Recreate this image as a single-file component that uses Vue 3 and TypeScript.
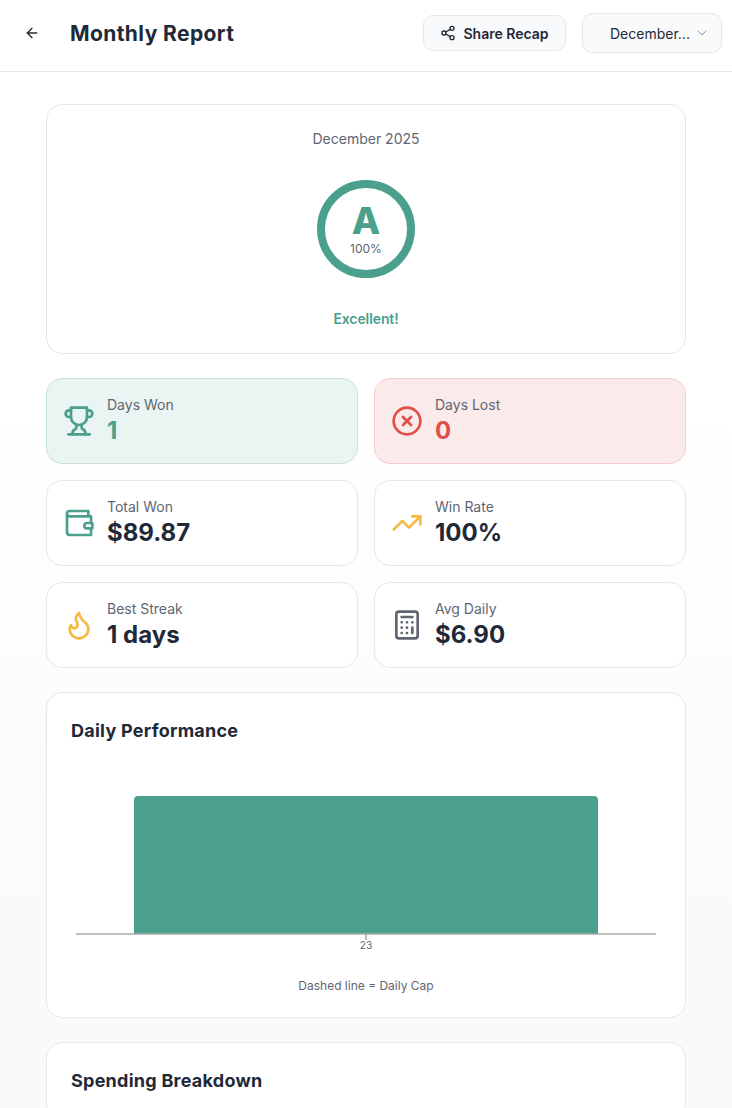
<script setup lang="ts">
interface Stat {
  label: string;
  value: string;
  icon: string;
  tone: string;
  iconTone: string;
}

const stats: Stat[] = [
  { label: 'Days Won', value: '1', icon: 'trophy', tone: 'won', iconTone: 'green' },
  { label: 'Days Lost', value: '0', icon: 'x', tone: 'lost', iconTone: 'red' },
  { label: 'Total Won', value: '$89.87', icon: 'wallet', tone: '', iconTone: 'green' },
  { label: 'Win Rate', value: '100%', icon: 'trend', tone: '', iconTone: 'amber' },
  { label: 'Best Streak', value: '1 days', icon: 'flame', tone: '', iconTone: 'amber' },
  { label: 'Avg Daily', value: '$6.90', icon: 'calc', tone: '', iconTone: 'gray' },
];
</script>

<template>
  <div class="page">
    <header class="topbar">
      <button class="back" aria-label="Back">
        <svg viewBox="0 0 24 24" class="icon16"><path d="m12 19-7-7 7-7" /><path d="M19 12H5" /></svg>
      </button>
      <h1>Monthly Report</h1>
      <button class="share">
        <svg viewBox="0 0 24 24" class="icon16">
          <circle cx="18" cy="5" r="3" /><circle cx="6" cy="12" r="3" /><circle cx="18" cy="19" r="3" />
          <line x1="8.59" y1="13.51" x2="15.42" y2="17.49" /><line x1="15.41" y1="6.51" x2="8.59" y2="10.49" />
        </svg>
        Share Recap
      </button>
      <button class="month">
        <span>December...</span>
        <svg viewBox="0 0 24 24" class="chev"><path d="m6 9 6 6 6-6" /></svg>
      </button>
    </header>

    <main class="content">
      <section class="card grade-card">
        <div class="period">December 2025</div>
        <div class="ring">
          <span class="letter">A</span>
          <span class="pct">100%</span>
        </div>
        <div class="verdict">Excellent!</div>
      </section>

      <section class="stats">
        <div v-for="s in stats" :key="s.label" class="stat" :class="s.tone">
          <svg viewBox="0 0 24 24" class="stat-icon" :class="s.iconTone">
            <template v-if="s.icon === 'trophy'">
              <path d="M6 9H4.5a2.5 2.5 0 0 1 0-5H6" /><path d="M18 9h1.5a2.5 2.5 0 0 0 0-5H18" /><path d="M4 22h16" />
              <path d="M10 14.66V17c0 .55-.47.98-.97 1.21C7.85 18.75 7 20.24 7 22" />
              <path d="M14 14.66V17c0 .55.47.98.97 1.21C16.15 18.75 17 20.24 17 22" />
              <path d="M18 2H6v7a6 6 0 0 0 12 0V2Z" />
            </template>
            <template v-else-if="s.icon === 'x'">
              <circle cx="12" cy="12" r="10" /><path d="m15 9-6 6" /><path d="m9 9 6 6" />
            </template>
            <template v-else-if="s.icon === 'wallet'">
              <path d="M21 12V7H5a2 2 0 0 1 0-4h14v4" /><path d="M3 5v14a2 2 0 0 0 2 2h16v-5" />
              <path d="M18 12a2 2 0 0 0 0 4h4v-4Z" />
            </template>
            <template v-else-if="s.icon === 'trend'">
              <polyline points="22 7 13.5 15.5 8.5 10.5 2 17" /><polyline points="16 7 22 7 22 13" />
            </template>
            <template v-else-if="s.icon === 'flame'">
              <path d="M8.5 14.5A2.5 2.5 0 0 0 11 12c0-1.38-.5-2-1-3-1.072-2.143-.224-4.054 2-6 .5 2.5 2 4.9 4 6.5 2 1.6 3 3.5 3 5.5a7 7 0 1 1-14 0c0-1.153.433-2.294 1-3a2.5 2.5 0 0 0 2.5 2.5z" />
            </template>
            <template v-else>
              <rect x="4" y="2" width="16" height="20" rx="2" /><line x1="8" y1="6" x2="16" y2="6" />
              <line x1="16" y1="14" x2="16" y2="18" />
              <path d="M16 10h.01M12 10h.01M8 10h.01M12 14h.01M8 14h.01M12 18h.01M8 18h.01" />
            </template>
          </svg>
          <div class="stat-text">
            <div class="stat-label">{{ s.label }}</div>
            <div class="stat-value">{{ s.value }}</div>
          </div>
        </div>
      </section>

      <section class="card chart-card">
        <h2>Daily Performance</h2>
        <svg class="chart" viewBox="0 0 590 190" width="590" height="190">
          <path class="bar" d="M63 178V44a4 4 0 0 1 4-4h456a4 4 0 0 1 4 4v134z" />
          <line class="axis" x1="5" y1="178" x2="585" y2="178" stroke-width="1.7" />
          <line class="axis" x1="295" y1="178" x2="295" y2="184" stroke-width="1.5" />
          <text x="295" y="193" text-anchor="middle" class="tick">23</text>
        </svg>
        <p class="note">Dashed line = Daily Cap</p>
      </section>

      <section class="card">
        <h2>Spending Breakdown</h2>
      </section>
    </main>
  </div>
</template>

<style>
body {
  background: #fff;
}
</style>

<style scoped>
.page {
  height: 100vh;
  display: flex;
  flex-direction: column;
  overflow: hidden;
  font-family: Inter, "Liberation Sans", sans-serif;
  color: #1f2937;
  background: linear-gradient(#fff 400px, #fafafb 900px);
}
.topbar {
  height: 72px;
  box-sizing: border-box;
  flex: none;
  display: flex;
  align-items: center;
  background: #fff;
  border-bottom: 1px solid #e5e7eb;
  padding: 0 10px 5px 24px;
}
svg {
  fill: none;
  stroke: currentColor;
  stroke-width: 2;
  stroke-linecap: round;
  stroke-linejoin: round;
}
button {
  font-family: inherit;
  color: #1f2937;
  cursor: pointer;
}
.back {
  width: 16px;
  height: 16px;
  padding: 0;
  border: 0;
  background: none;
  display: flex;
}
.icon16 {
  width: 16px;
  height: 16px;
  flex: none;
}
h1 {
  margin: 0 0 0 30px;
  flex: 1;
  font-size: 21px;
  font-weight: 700;
  letter-spacing: 0.4px;
}
.share {
  height: 36px;
  width: 143px;
  display: flex;
  align-items: center;
  justify-content: center;
  gap: 7px;
  border: 1px solid #e5e7eb;
  border-radius: 10px;
  background: #f9fafb;
  font-size: 14px;
  font-weight: 600;
}
.month {
  height: 40px;
  width: 140px;
  margin-left: 16px;
  display: flex;
  align-items: center;
  padding: 0 11px 0 27px;
  border: 1px solid #e5e7eb;
  border-radius: 10px;
  background: #f9fafb;
  font-size: 14px;
}
.chev {
  width: 16px;
  height: 16px;
  margin-left: auto;
  opacity: 0.5;
  stroke-width: 1.5;
}
.content {
  width: 640px;
  margin: 0 auto;
  padding-top: 32px;
  display: flex;
  flex-direction: column;
  gap: 24px;
}
.card {
  flex: none;
  background: #fff;
  border: 1px solid #e5e7eb;
  border-radius: 16px;
  padding: 24px;
}
.grade-card {
  height: 250px;
  box-sizing: border-box;
  display: flex;
  flex-direction: column;
  align-items: center;
  padding-top: 25px;
}
.period {
  font-size: 14px;
  line-height: 17px;
  color: #5f6672;
}
.ring {
  width: 98px;
  height: 98px;
  box-sizing: border-box;
  margin-top: 33px;
  padding-top: 3px;
  border: 8px solid #4aa08c;
  border-radius: 50%;
  display: flex;
  flex-direction: column;
  align-items: center;
  justify-content: center;
  gap: 5px;
}
.letter {
  font-size: 37px;
  line-height: 30px;
  font-weight: 800;
  color: #4aa08c;
}
.pct {
  font-size: 12px;
  line-height: 15px;
  color: #5f6672;
}
.verdict {
  margin-top: 32px;
  font-size: 14px;
  line-height: 17px;
  font-weight: 600;
  letter-spacing: -0.1px;
  color: #4aa08c;
}
.stats {
  flex: none;
  display: grid;
  grid-template-columns: 1fr 1fr;
  gap: 16px;
}
.stat {
  height: 86px;
  box-sizing: border-box;
  display: flex;
  align-items: center;
  gap: 12px;
  padding: 0 16px;
  background: #fff;
  border: 1px solid #e5e7eb;
  border-radius: 16px;
}
.stat.won {
  background: #eaf4f2;
  border-color: #c9e3dc;
}
.stat.lost {
  background: #faeaea;
  border-color: #f5cdcb;
}
.stat-icon {
  width: 32px;
  height: 32px;
  flex: none;
}
.green {
  color: #4aa08c;
}
.red {
  color: #e04f4a;
}
.amber {
  color: #f5b942;
}
.gray {
  color: #5f6672;
}
.stat-label {
  font-size: 14px;
  line-height: 20px;
  color: #5f6672;
}
.stat-value {
  font-size: 24px;
  line-height: 32px;
  font-weight: 700;
}
.won .stat-value {
  color: #4aa08c;
}
.lost .stat-value {
  color: #e04f4a;
}
h2 {
  margin: 0;
  font-size: 18px;
  line-height: 28px;
  font-weight: 700;
  letter-spacing: 0.25px;
}
.chart-card {
  height: 326px;
  box-sizing: border-box;
}
.chart {
  display: block;
  margin-top: 11px;
  overflow: visible;
}
.bar {
  fill: #4aa08c;
  stroke: none;
}
.axis {
  stroke: #a8a8a8;
  stroke-linecap: butt;
}
.tick {
  font-size: 10px;
  fill: #5f6672;
  stroke: none;
}
.note {
  margin: 32px 0 0;
  text-align: center;
  font-size: 12px;
  line-height: 15px;
  color: #5f6672;
}
</style>
